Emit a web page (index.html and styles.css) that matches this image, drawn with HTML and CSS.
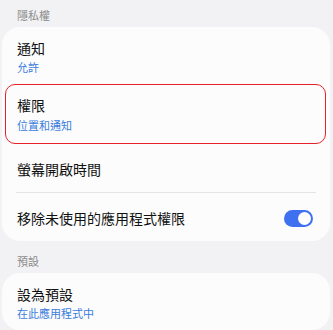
FILE: index.html
```html
<!DOCTYPE html>
<html lang="zh-Hant">
<head>
    <meta charset="UTF-8">
    <meta name="viewport" content="width=device-width, initial-scale=1.0">
    <title>應用程式資訊</title>
    <link rel="stylesheet" href="styles.css">
</head>
<body>
<div class="section-label">隱私權</div>
<div class="card">
    <div class="item">
        <div class="title">通知</div>
        <div class="sub">允許</div>
    </div>
    <div class="item highlight">
        <div class="title">權限</div>
        <div class="sub">位置和通知</div>
    </div>
    <div class="item single">
        <div class="title">螢幕開啟時間</div>
    </div>
    <div class="divider"></div>
    <div class="item single switch-row">
        <div class="title">移除未使用的應用程式權限</div>
        <div class="switch on"><span class="knob"></span></div>
    </div>
</div>

<div class="section-label second">預設</div>
<div class="card">
    <div class="item">
        <div class="title">設為預設</div>
        <div class="sub">在此應用程式中</div>
    </div>
</div>
</body>
</html>
```

FILE: styles.css
```css
* {
    margin: 0;
    padding: 0;
    box-sizing: border-box;
}

body {
    font-family: "Noto Sans CJK TC", "Noto Sans", sans-serif;
    background-color: #f2f2f4;
    color: #111;
    overflow: hidden;
}

/* Section headers */
.section-label {
    font-size: 11px;
    line-height: 16px;
    color: #8a8a8a;
    padding: 7px 17px 4px;
}

.section-label.second {
    padding: 12px 17px 4px;
}

/* Cards */
.card {
    background-color: #fcfcfc;
    border-radius: 18px;
    margin: 0 3px 0 2px;
}

.item {
    padding: 11px 15px 9px;
}

.item .title {
    font-size: 14px;
    line-height: 20px;
}

.item .sub {
    font-size: 11px;
    line-height: 16px;
    margin-top: 1px;
    color: #3b7ddd;
}

.item.highlight {
    margin: 0 4px 0 3px;
    padding: 10px 11px 10px;
    border: 1.5px solid #e8202a;
    border-radius: 10px;
}

.item.highlight .sub {
    margin-top: 2px;
}

.item.single {
    padding: 15px 15px 13px;
}

.divider {
    height: 1px;
    background-color: #e4e4e4;
    margin: 0 14px;
}

/* Toggle row */
.switch-row {
    display: flex;
    align-items: center;
    justify-content: space-between;
}

.switch {
    width: 29px;
    height: 17px;
    border-radius: 9px;
    background-color: #3f70f0;
    display: flex;
    align-items: center;
    justify-content: flex-end;
    padding: 0 2px;
    margin-right: 2px;
}

.switch .knob {
    width: 13px;
    height: 13px;
    border-radius: 50%;
    background-color: #fff;
}
```
